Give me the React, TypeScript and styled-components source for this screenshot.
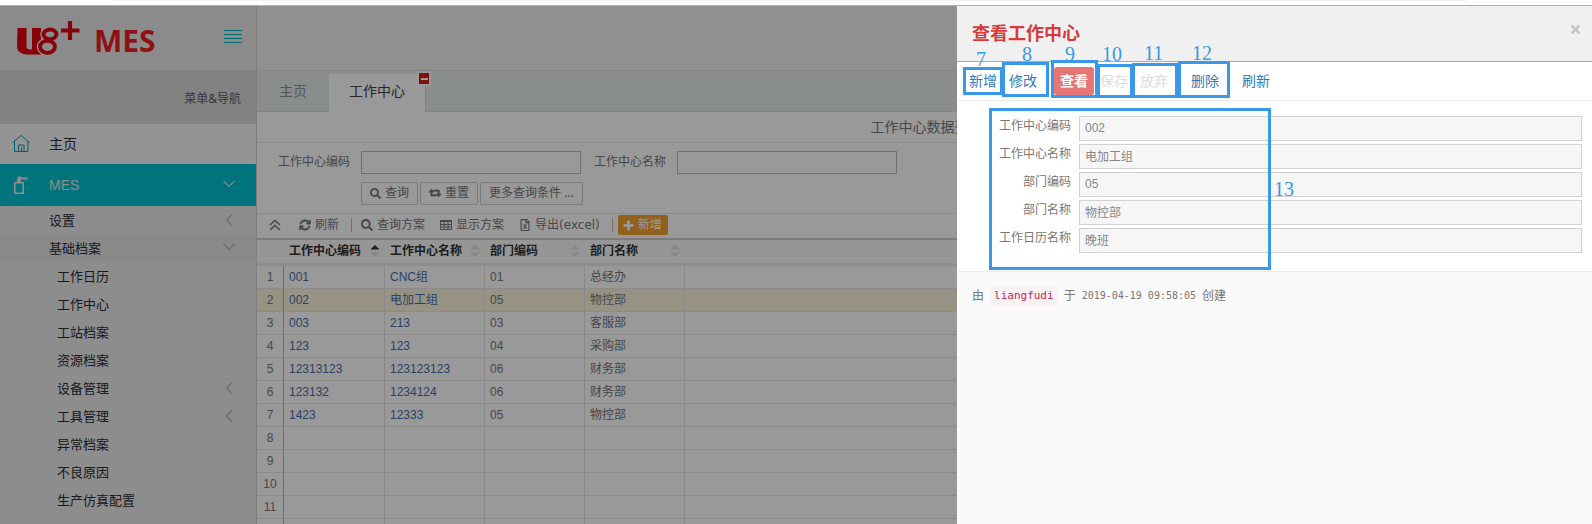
import React from "react";
import styled, { createGlobalStyle, css } from "styled-components";
import { FaSearch, FaRetweet, FaPlus, FaTimes, FaRegFileExcel } from "react-icons/fa";
import { FaArrowsRotate } from "react-icons/fa6";

const cjk = `"Noto Sans CJK SC", sans-serif`;
const uiFont = `"Noto Sans", ${cjk}`;
const gridFont = `"Liberation Sans", ${cjk}`;

const GlobalStyle = createGlobalStyle`
  * { box-sizing: border-box; }
  body { margin: 0; background: #fff; font: 12px/16px ${uiFont}; color: #777; overflow: hidden; }
  button, input { font: inherit; color: inherit; margin: 0; padding: 0; }
  a { color: inherit; text-decoration: none; }
  h1, h2, p, ul { margin: 0; padding: 0; font-weight: normal; }
  ul { list-style: none; }
`;

const Page = styled.div`
  display: flex;
  flex-direction: column;
  height: 100vh;
`;
const BrowserEdge = styled.div`
  flex: none;
  height: 5px;
  padding: 0 126px 0 115px;
  &::before {
    content: "";
    display: block;
    height: 1px;
    background: #f1f1f1;
  }
`;
const Workspace = styled.div`
  position: relative;
  flex: 1;
  min-height: 0;
  display: flex;
  border-top: 1px solid #b0b0b0;
`;
const Shade = styled.div`
  position: absolute;
  inset: 0;
  background: rgba(0, 0, 0, 0.4);
`;

/* Sidebar */
const Sidebar = styled.aside`
  flex: none;
  width: 257px;
  background: #ebebeb;
  border-right: 1px solid #d2d2d2;
  overflow: hidden;
`;
const Brand = styled.div`
  display: flex;
  align-items: center;
  justify-content: space-between;
  height: 64px;
  padding: 0 14px 0 16px;
  background: #e8e8e8;
`;
const MenuButton = styled.button`
  display: flex;
  flex-direction: column;
  gap: 3px;
  width: 18px;
  margin-bottom: 3px;
  border: 0;
  background: none;
  span {
    height: 1px;
    background: #00b4c2;
  }
`;
const NavHeading = styled.h2`
  height: 54px;
  padding: 0 15px;
  background: #d9d9d9;
  color: #5a5a66;
  font-size: 12px;
  line-height: 57px;
  text-align: right;
`;
const NavLink = styled.a<{ $active?: boolean }>`
  display: flex;
  align-items: center;
  gap: 16px;
  height: ${(p) => (p.$active ? 42 : 40)}px;
  padding: 0 20px 0 12px;
  background: ${(p) => (p.$active ? "#00c1d0" : "#f7f7f7")};
  color: ${(p) => (p.$active ? "#e8e8e8" : "#2c2c38")};
  font: 14px/20px ${gridFont};
  svg:first-child {
    width: 20px;
    height: 20px;
  }
`;
const NavLabel = styled.span`
  flex: 1;
  margin-left: 1px;
`;
const SubLink = styled.a<{ $level: number; $open?: boolean }>`
  display: flex;
  align-items: center;
  justify-content: space-between;
  height: 28px;
  padding: 0 20px 0 ${(p) => (p.$level === 1 ? 49 : 57)}px;
  background: ${(p) => (p.$open ? "#e6e6e6" : "transparent")};
  color: #2c2c38;
  font-size: 13px;
`;

/* Main column */
const Main = styled.main`
  flex: 1;
  min-width: 0;
  background: #fff;
  overflow: hidden;
`;
const TopBar = styled.header`
  height: 64px;
  background: #f0f0f0;
`;
const Tabs = styled.nav`
  display: flex;
  align-items: flex-end;
  height: 42px;
  border-top: 1px solid #dcdcdc;
  border-bottom: 1px solid #d8dcda;
  background: #e4ebe8;
`;
const Tab = styled.a<{ $active?: boolean }>`
  position: relative;
  height: 38px;
  margin-bottom: -1px;
  padding: 0 ${(p) => (p.$active ? 20 : 22)}px;
  font-size: 14px;
  line-height: 34px;
  color: #8c9290;
  ${(p) =>
    p.$active &&
    css`
      background: #fff;
      color: #444;
      border-right: 1px solid #d4d9d6;
    `}
`;
const TabClose = styled.button`
  position: absolute;
  top: -3px;
  right: -6px;
  display: flex;
  align-items: center;
  justify-content: center;
  width: 14px;
  height: 15px;
  border: 2px solid #fff;
  border-radius: 2px;
  background: #c9201f;
  &::before {
    content: "";
    width: 7px;
    height: 2px;
    background: #fff;
  }
`;
const ListTitle = styled.h1`
  height: 31px;
  padding-left: 4px;
  border-bottom: 1px solid #e8e8e8;
  font-size: 14px;
  line-height: 30px;
  text-align: center;
`;
const SearchForm = styled.form`
  display: grid;
  grid-template-columns: 72px 222px 72px 222px;
  column-gap: 11px;
  row-gap: 7px;
  padding: 8px 21px;
  height: 70px;
  line-height: 22px;
`;
const SearchInput = styled.input`
  width: 220px;
  height: 23px;
  border: 1px solid #bbb;
  background: #fff;
`;
const SearchActions = styled.div`
  grid-column: 2 / -1;
  display: flex;
  gap: 2px;
`;
const SmallButton = styled.button`
  display: flex;
  align-items: center;
  gap: 4px;
  height: 23px;
  padding: 0 8px;
  border: 1px solid #ccc;
  border-radius: 2px;
  background: #fff;
  line-height: 20px;
  white-space: nowrap;
`;
const Toolbar = styled.div`
  display: flex;
  align-items: center;
  height: 27px;
  padding: 0 12px 2px;
  border-top: 1px solid #e8e8e8;
  border-bottom: 2px solid #d4cdc8;
  font-family: "DejaVu Sans", ${cjk};
`;
const ToolButton = styled.button<{ $space?: number }>`
  display: flex;
  align-items: center;
  gap: 4px;
  margin-right: ${(p) => p.$space ?? 15}px;
  border: 0;
  background: none;
  white-space: nowrap;
`;
const Divider = styled.span<{ $space: number }>`
  width: 1px;
  height: 14px;
  margin-right: ${(p) => p.$space}px;
  background: #bbb;
`;
const AddButton = styled.button`
  display: flex;
  align-items: center;
  gap: 4px;
  height: 20px;
  padding: 0 6px 0 5px;
  border: 0;
  border-radius: 2px;
  background: #f2a02c;
  color: #fff;
  line-height: 20px;
`;

const Table = styled.table`
  width: 100%;
  table-layout: fixed;
  border-collapse: separate;
  border-spacing: 0;
  font-family: ${gridFont};
`;
const NumCol = styled.col`
  width: 27px;
`;
const DataCol = styled.col<{ $first?: boolean }>`
  width: ${(p) => (p.$first ? 101 : 100)}px;
`;
const HeadCell = styled.th`
  height: 26px;
  padding: 0 5px 1px;
  border-bottom: 3px solid #ececec;
  background: #fafafa;
  color: #333;
  text-align: left;
`;
const HeadInner = styled.span`
  display: flex;
  align-items: center;
  justify-content: space-between;
`;
const Row = styled.tr<{ $selected?: boolean }>`
  background: ${(p) => (p.$selected ? "#fbf6de" : "#fff")};
`;
const cell = css`
  height: 23px;
  padding: 0;
  border-bottom: 1px solid #e8e8e8;
  line-height: 20px;
`;
const NumCell = styled.th`
  ${cell}
  border-right: 1px solid #b4b4b4;
  font-weight: normal;
  text-align: center;
`;
const Cell = styled.td<{ $link?: boolean }>`
  ${cell}
  padding-left: 5px;
  border-right: 1px solid #e4e4e4;
  color: ${(p) => (p.$link ? "#4a6ea8" : "#777")};
`;

/* Detail panel */
const Panel = styled.section`
  position: absolute;
  top: 0;
  right: 0;
  bottom: 0;
  width: 40vw;
  max-width: 635px;
  background: #fafafa;
`;
const PanelHeader = styled.header`
  display: flex;
  justify-content: space-between;
  height: 56px;
  padding: 15px 10px 0 15px;
  border-bottom: 1px solid #aaa;
  background: #f0f0f0;
`;
const PanelTitle = styled.h2`
  color: #d9393a;
  font-size: 18px;
  font-weight: bold;
  line-height: 24px;
`;
const CloseButton = styled.button`
  height: 16px;
  border: 0;
  background: none;
  color: #c2c2c2;
  font-size: 13px;
  line-height: 0;
`;
const PanelBody = styled.div`
  background: #fff;
  border-bottom: 1px solid #ececec;
`;
const Actions = styled.div`
  display: flex;
  align-items: center;
  height: 39px;
  padding-left: 6px;
  border-bottom: 1px solid #ececec;
`;
const Action = styled.button<{ $current?: boolean; $space?: number }>`
  height: 28px;
  padding: 0 6px;
  margin-right: ${(p) => p.$space ?? 0}px;
  border: 0;
  border-radius: 3px;
  background: ${(p) => (p.$current ? "#e57673" : "none")};
  color: ${(p) => (p.$current ? "#fff" : "#337ab7")};
  font-size: 14px;
  line-height: 28px;
  font-weight: ${(p) => (p.$current ? "bold" : "normal")};
  &:disabled {
    color: #ddd;
  }
`;
const Fields = styled.form`
  display: grid;
  grid-template-columns: 114px 1fr;
  column-gap: 8px;
  row-gap: 3px;
  padding: 15px 10px 18px 0;
`;
const FieldLabel = styled.label`
  line-height: 20px;
  text-align: right;
`;
const Field = styled.input`
  width: 100%;
  height: 25px;
  padding: 0 5px 2px;
  border: 1px solid #d2d2d2;
  background: #f6f6f6;
  color: #888;
  font-family: ${gridFont};
`;
const Meta = styled.p`
  display: flex;
  align-items: center;
  gap: 6px;
  padding: 15px;
  font-family: "DejaVu Sans Mono", ${cjk};
  line-height: 18px;
`;
const Stamp = styled.time`
  font-size: 10px;
`;
const User = styled.code`
  padding: 0 4px;
  border-radius: 3px;
  background: #f9f2f4;
  color: #c7254e;
  font: 11px/18px "DejaVu Sans Mono", monospace;
`;

/* Callouts lying over the panel */
const Callout = styled.div<{ $x: number; $y: number; $w: number; $h: number }>`
  position: absolute;
  left: ${(p) => p.$x}px;
  top: ${(p) => p.$y}px;
  width: ${(p) => p.$w}px;
  height: ${(p) => p.$h}px;
  border: 3px solid #3a98e8;
  pointer-events: none;
`;
const CalloutNumber = styled.span<{ $x: number; $y: number }>`
  position: absolute;
  left: ${(p) => p.$x}px;
  top: ${(p) => p.$y}px;
  color: #3a98e8;
  font: 20px/20px "Liberation Serif", serif;
  pointer-events: none;
`;

const Chevron = ({ open, color }: { open?: boolean; color: string }) => (
  <svg width="14" height="14" viewBox="0 0 14 14" fill="none" stroke={color} strokeWidth="1.2">
    <path d={open ? "M1.500 3L7 8.500L12.500 3" : "M10 1.500L4.500 7L10 12.500"} />
  </svg>
);
const CollapseIcon = () => (
  <svg width="12" height="12" viewBox="0 0 12 12" fill="none" stroke="currentColor" strokeWidth="1.500">
    <path d="M1 6L6 1.500L11 6M1 11L6 6.500L11 11" />
  </svg>
);
const GridIcon = () => (
  <svg width="12" height="12" viewBox="0 0 12 12" fill="none" stroke="currentColor">
    <path d="M.5 1.500H11.500V10.500H.5ZM.5 2.500H11.500M.5 5.500H11.500M.5 8H11.500M4 1.500V10.500M8 1.500V10.500" />
  </svg>
);
const SortMark = ({ active }: { active?: boolean }) => (
  <svg width="10" height="14" viewBox="0 0 10 14">
    <path d="M.5 5.500L5 1L9.500 5.500Z" fill={active ? "#333" : "#e0e0e0"} />
    <path d="M.5 8.500L5 13L9.500 8.500Z" fill="#e0e0e0" />
  </svg>
);
const HomeIcon = () => (
  <svg viewBox="0 0 20 20" fill="none" stroke="#00a5b2">
    <path d="M.5 8.500L9 1.500L17.500 8.500M2.500 7V17.500H16V7M6.500 17.500V11H12V17.500M9.500 17V13.500" />
  </svg>
);
const SprayIcon = () => (
  <svg viewBox="0 0 20 20" fill="none" stroke="#eee" strokeWidth="1.500">
    <path d="M2.750 7.750H11.250V18.250H2.750Z" />
    <path d="M5 7V4.500L6 3V1.500H9V2.500H16V3.500L12 4L15.500 4.500V5.500L9 4V7Z" fill="#eee" stroke="none" />
  </svg>
);
const Logo = () => (
  <svg width="150" height="48" viewBox="0 -4 150 48" role="img" aria-label="U8+ MES">
    <path
      d="M1.500 10H10.500V28Q10.500 31.500 14 31.500H16V10H25V36.500H12Q1 36.500 1 28Z"
      fill="#e3000f"
    />
    <g fill="#e8e8e8" stroke="#e8e8e8" strokeWidth="6.500">
      <ellipse cx="34" cy="16.300" rx="6.500" ry="4.800" />
      <ellipse cx="31.500" cy="28.800" rx="7.500" ry="6" />
    </g>
    <g fill="none" stroke="#e3000f" strokeWidth="3.800">
      <ellipse cx="34" cy="16.300" rx="6.500" ry="4.800" />
      <ellipse cx="31.500" cy="28.800" rx="7.500" ry="6" />
      <path d="M45 12.500H63.500M54 3V22" strokeWidth="4.200" />
    </g>
    <text
      x="78"
      y="34"
      fontFamily="'Open Sans', sans-serif"
      fontSize="30"
      fontWeight="bold"
      fill="#ee1c24"
    >
      MES
    </text>
  </svg>
);

const archiveItems: [string, boolean?][] = [
  ["工作日历"],
  ["工作中心"],
  ["工站档案"],
  ["资源档案"],
  ["设备管理", true],
  ["工具管理", true],
  ["异常档案"],
  ["不良原因"],
  ["生产仿真配置"],
];
const columns = ["工作中心编码", "工作中心名称", "部门编码", "部门名称"];
const rows = [
  ["1", "001", "CNC组", "01", "总经办"],
  ["2", "002", "电加工组", "05", "物控部"],
  ["3", "003", "213", "03", "客服部"],
  ["4", "123", "123", "04", "采购部"],
  ["5", "12313123", "123123123", "06", "财务部"],
  ["6", "123132", "1234124", "06", "财务部"],
  ["7", "1423", "12333", "05", "物控部"],
  ["8"],
  ["9"],
  ["10"],
  ["11"],
  [],
];
const fields = [
  ["工作中心编码", "002"],
  ["工作中心名称", "电加工组"],
  ["部门编码", "05"],
  ["部门名称", "物控部"],
  ["工作日历名称", "晚班"],
];
const callouts = [
  { n: 7, x: 6, y: 61, w: 40, h: 28, nx: 19, ny: 43 },
  { n: 8, x: 45, y: 56, w: 47, h: 35, nx: 65, ny: 38 },
  { n: 9, x: 94, y: 54, w: 47, h: 38, nx: 108, ny: 38 },
  { n: 10, x: 140, y: 58, w: 36, h: 34, nx: 145, ny: 38 },
  { n: 11, x: 175, y: 57, w: 46, h: 35, nx: 187, ny: 37 },
  { n: 12, x: 221, y: 55, w: 52, h: 37, nx: 235, ny: 37 },
  { n: 13, x: 32, y: 102, w: 282, h: 162, nx: 317, ny: 173 },
];

export default function App() {
  return (
    <Page>
      <GlobalStyle />
      <BrowserEdge />
      <Workspace>
        <Sidebar>
          <Brand>
            <Logo />
            <MenuButton aria-label="菜单">
              <span />
              <span />
              <span />
              <span />
            </MenuButton>
          </Brand>
          <NavHeading>菜单&amp;导航</NavHeading>
          <nav>
            <NavLink href="#home">
              <HomeIcon />
              <NavLabel>主页</NavLabel>
            </NavLink>
            <NavLink href="#mes" $active>
              <SprayIcon />
              <NavLabel>MES</NavLabel>
              <Chevron open color="#d0e4e6" />
            </NavLink>
            <SubLink href="#settings" $level={1}>
              设置
              <Chevron color="#b4b4b4" />
            </SubLink>
            <SubLink href="#archives" $level={1} $open>
              基础档案
              <Chevron open color="#b4b4b4" />
            </SubLink>
            <ul>
              {archiveItems.map(([name, nested]) => (
                <li key={name}>
                  <SubLink href="#item" $level={2}>
                    {name}
                    {nested && <Chevron color="#b4b4b4" />}
                  </SubLink>
                </li>
              ))}
            </ul>
          </nav>
        </Sidebar>

        <Main>
          <TopBar />
          <Tabs>
            <Tab href="#home">主页</Tab>
            <Tab as="div" $active>
              工作中心
              <TabClose aria-label="关闭" />
            </Tab>
          </Tabs>
          <ListTitle>工作中心数据列表</ListTitle>
          <SearchForm>
            <label htmlFor="q-code">工作中心编码</label>
            <SearchInput id="q-code" />
            <label htmlFor="q-name">工作中心名称</label>
            <SearchInput id="q-name" />
            <SearchActions>
              <SmallButton type="button">
                <FaSearch size={11} />
                查询
              </SmallButton>
              <SmallButton type="button">
                <FaRetweet size={12} strokeWidth={40} stroke="currentColor" />
                重置
              </SmallButton>
              <SmallButton type="button">更多查询条件 ...</SmallButton>
            </SearchActions>
          </SearchForm>
          <Toolbar>
            <ToolButton $space={18} aria-label="收起">
              <CollapseIcon />
            </ToolButton>
            <ToolButton $space={12}>
              <FaArrowsRotate size={12} stroke="currentColor" strokeWidth={24} />
              刷新
            </ToolButton>
            <Divider $space={9} />
            <ToolButton>
              <FaSearch size={12} />
              查询方案
            </ToolButton>
            <ToolButton>
              <GridIcon />
              显示方案
            </ToolButton>
            <ToolButton $space={12}>
              <FaRegFileExcel size={12} />
              导出(excel)
            </ToolButton>
            <Divider $space={5} />
            <AddButton>
              <FaPlus size={11} stroke="currentColor" strokeWidth={40} />
              新增
            </AddButton>
          </Toolbar>
          <Table>
            <colgroup>
              <NumCol />
              <DataCol $first />
              <DataCol />
              <DataCol />
              <DataCol />
              <col />
            </colgroup>
            <thead>
              <tr>
                <HeadCell />
                {columns.map((name, i) => (
                  <HeadCell key={name} scope="col">
                    <HeadInner>
                      {name}
                      <SortMark active={i === 0} />
                    </HeadInner>
                  </HeadCell>
                ))}
                <HeadCell />
              </tr>
            </thead>
            <tbody>
              {rows.map(([num, ...values], r) => (
                <Row key={r} $selected={r === 1}>
                  <NumCell scope="row">{num}</NumCell>
                  {columns.map((name, c) => (
                    <Cell key={name} $link={c < 2}>
                      {values[c]}
                    </Cell>
                  ))}
                  <Cell />
                </Row>
              ))}
            </tbody>
          </Table>
        </Main>

        <Shade />

        <Panel>
          <PanelHeader>
            <PanelTitle>查看工作中心</PanelTitle>
            <CloseButton aria-label="关闭">
              <FaTimes />
            </CloseButton>
          </PanelHeader>
          <PanelBody>
            <Actions>
              <Action>新增</Action>
              <Action $space={11}>修改</Action>
              <Action $current>查看</Action>
              <Action disabled>保存</Action>
              <Action disabled $space={11}>
                放弃
              </Action>
              <Action $space={11}>删除</Action>
              <Action>刷新</Action>
            </Actions>
            <Fields>
              {fields.map(([label, value], i) => (
                <React.Fragment key={label}>
                  <FieldLabel htmlFor={`field-${i}`}>{label}</FieldLabel>
                  <Field id={`field-${i}`} value={value} readOnly />
                </React.Fragment>
              ))}
            </Fields>
          </PanelBody>
          <Meta>
            由 <User>liangfudi</User> 于 <Stamp>2019-04-19 09:58:05</Stamp> 创建
          </Meta>
          {callouts.map((c) => (
            <React.Fragment key={c.n}>
              <Callout $x={c.x} $y={c.y} $w={c.w} $h={c.h} />
              <CalloutNumber $x={c.nx} $y={c.ny}>
                {c.n}
              </CalloutNumber>
            </React.Fragment>
          ))}
        </Panel>
      </Workspace>
    </Page>
  );
}
